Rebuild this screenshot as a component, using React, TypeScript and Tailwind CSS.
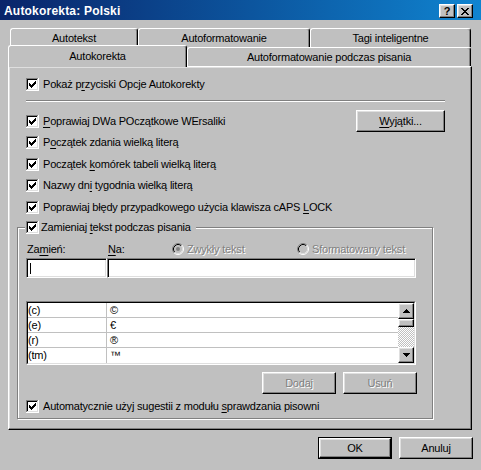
import React from "react";

const raised =
  "bg-[#c0c0c0] border border-t-white border-l-white border-b-black border-r-black shadow-[inset_-1px_-1px_0_#808080,inset_1px_1px_0_#dfdfdf]";

function CheckBox() {
  const cols: [number, number][] = [
    [3, 5],
    [4, 6],
    [5, 7],
    [6, 6],
    [7, 5],
    [8, 4],
    [9, 3],
  ];
  return (
    <svg width="13" height="13" viewBox="0 0 13 13" shapeRendering="crispEdges" className="shrink-0 block">
      <rect x="0" y="0" width="13" height="13" fill="#fff" />
      <rect x="0" y="0" width="12" height="1" fill="#808080" />
      <rect x="0" y="0" width="1" height="12" fill="#808080" />
      <rect x="1" y="1" width="10" height="1" fill="#000" />
      <rect x="1" y="1" width="1" height="10" fill="#000" />
      <rect x="1" y="11" width="11" height="1" fill="#dfdfdf" />
      <rect x="11" y="1" width="1" height="11" fill="#dfdfdf" />
      {cols.map(([x, y]) => (
        <rect key={x} x={x} y={y} width="1" height="3" fill="#000" />
      ))}
    </svg>
  );
}

function Radio({ on }: { on?: boolean }) {
  return (
    <svg width="12" height="12" viewBox="0 0 12 12" className="shrink-0 block">
      <circle cx="6" cy="6" r="5" fill="#c0c0c0" />
      <path d="M2.11 9.89 A5.5 5.5 0 0 1 9.89 2.11" fill="none" stroke="#808080" strokeWidth="1" />
      <path d="M9.89 2.11 A5.5 5.5 0 0 1 2.11 9.89" fill="none" stroke="#fff" strokeWidth="1" />
      <path d="M2.82 9.18 A4.5 4.5 0 0 1 9.18 2.82" fill="none" stroke="#000" strokeWidth="1" />
      <path d="M9.18 2.82 A4.5 4.5 0 0 1 2.82 9.18" fill="none" stroke="#dfdfdf" strokeWidth="1" />
      {on && <circle cx="6" cy="6" r="2" fill="#808080" />}
    </svg>
  );
}

function CheckRow({ children, className = "" }: { children: React.ReactNode; className?: string }) {
  return (
    <div className={"flex items-center h-[13px] whitespace-nowrap " + className}>
      <CheckBox />
      <span className="ml-[4px] leading-none">{children}</span>
    </div>
  );
}

function U({ children }: { children: React.ReactNode }) {
  return <span className="underline underline-offset-[2px]">{children}</span>;
}

function Arrow({ up }: { up?: boolean }) {
  const rows = up
    ? [
        [3, 1],
        [2, 3],
        [1, 5],
        [0, 7],
      ]
    : [
        [0, 7],
        [1, 5],
        [2, 3],
        [3, 1],
      ];
  return (
    <svg width="7" height="4" viewBox="0 0 7 4" shapeRendering="crispEdges" className="block">
      {rows.map(([x, w], i) => (
        <rect key={i} x={x} y={i} width={w} height="1" fill="#000" />
      ))}
    </svg>
  );
}

function CloseGlyph() {
  const r: [number, number, number][] = [
    [0, 0, 2], [6, 0, 2],
    [1, 1, 2], [5, 1, 2],
    [2, 2, 4],
    [3, 3, 2],
    [2, 4, 4],
    [1, 5, 2], [5, 5, 2],
    [0, 6, 2], [6, 6, 2],
  ];
  return (
    <svg width="8" height="7" viewBox="0 0 8 7" shapeRendering="crispEdges" className="block">
      {r.map(([x, y, w], i) => (
        <rect key={i} x={x} y={y} width={w} height="1" fill="#000" />
      ))}
    </svg>
  );
}

const tabCls =
  "h-full flex justify-center pt-[2px] bg-[#c0c0c0] border-l border-t border-r border-l-white border-t-white border-r-black rounded-t-[3px] shadow-[inset_-1px_0_0_#808080] whitespace-nowrap leading-[14px]";

const disabledText = "text-[#808080] [text-shadow:1px_1px_0_#fff]";

export default function App() {
  const rows: [string, string][] = [
    ["(c)", "©"],
    ["(e)", "€"],
    ["(r)", "®"],
    ["(tm)", "™"],
  ];
  return (
    <div className="w-[481px] h-[470px] bg-[#c0c0c0] font-['Liberation_Sans',Arial,sans-serif] text-[11px] tracking-[-0.2px] text-black flex flex-col overflow-hidden select-none">
      {/* Title bar */}
      <div className="h-[20px] shrink-0 flex items-center pt-[2px] pl-[4px] pr-[8px] bg-linear-to-r from-[#0a246a] to-[#1084d0]">
        <div className="flex-1 text-white font-bold text-[12px] tracking-[0.2px] leading-none">Autokorekta: Polski</div>
        <div className="flex gap-[2px]">
          <div className={"w-[16px] h-[14px] flex items-center justify-center " + raised}>
            <span className="font-bold text-[11px] leading-none tracking-normal">?</span>
          </div>
          <div className={"w-[16px] h-[14px] flex items-center justify-center " + raised}>
            <CloseGlyph />
          </div>
        </div>
      </div>

      {/* Tabs back row */}
      <div className="mt-[8px] h-[19px] shrink-0 flex pl-[10px]">
        <div className={tabCls + " w-[128px]"}>Autotekst</div>
        <div className={tabCls + " w-[172px]"}>Autoformatowanie</div>
        <div className={tabCls + " w-[161px]"}>Tagi inteligentne</div>
      </div>
      {/* Tabs front row */}
      <div className="-mt-[2px] h-[21px] shrink-0 flex items-end pl-[8px] relative z-10">
        <div className={tabCls + " w-[179px] !h-[22px] -mb-[1px] pt-[3px]"}>Autokorekta</div>
        <div className={tabCls + " w-[284px] !h-[19px]"}>Autoformatowanie podczas pisania</div>
      </div>

      {/* Panel */}
      <div className="ml-[8px] w-[464px] h-[364px] shrink-0 border border-t-white border-l-white border-b-black border-r-black shadow-[inset_-1px_-1px_0_#808080,inset_1px_1px_0_#dfdfdf] flex flex-col">
        <div className="ml-[17px] w-[419px] pt-[11px] flex flex-col">
          <CheckRow>
            Pokaż p<U>r</U>zyciski Opcje Autokorekty
          </CheckRow>
          <div className="mt-[9px] h-[2px] border-t border-t-[#808080] border-b border-b-white" />
          <div className="mt-[8px] h-[22px] flex items-center justify-between">
            <CheckRow>
              <U>P</U>oprawiaj DWa POczątkowe WErsaliki
            </CheckRow>
            <div className={"w-[89px] h-[22px] flex items-center justify-center " + raised}>
              <span className="leading-none">
                <U>W</U>yjątki...
              </span>
            </div>
          </div>
          <CheckRow className="mt-[4px]">
            P<U>o</U>czątek zdania wielką literą
          </CheckRow>
          <CheckRow className="mt-[9px]">
            Początek <U>k</U>omórek tabeli wielką literą
          </CheckRow>
          <CheckRow className="mt-[8px]">
            Nazwy dn<U>i</U> tygodnia wielką literą
          </CheckRow>
          <CheckRow className="mt-[9px]">
            Poprawiaj błędy przypadkowego użycia klawisza cAPS <U>L</U>OCK
          </CheckRow>
        </div>

        {/* Group box */}
        <div className="mt-[13px] ml-[8px] w-[416px] relative border border-[#808080] shadow-[inset_1px_1px_0_#fff,1px_1px_0_#fff] pl-[8px] pr-[15px] pt-[14px] pb-[5px]">
          <div className="absolute left-[7px] -top-[7px] h-[13px] flex items-center bg-[#c0c0c0] pl-[1px] pr-[5px] whitespace-nowrap">
            <CheckBox />
            <span className="ml-[2px] leading-none">
              Zamieniaj <U>t</U>ekst podczas pisania
            </span>
          </div>

          <div className="h-[14px] flex items-center whitespace-nowrap">
            <div className="w-[81px] pl-[1px] leading-none">
              Za<U>m</U>ień:
            </div>
            <div className="w-[65px] pl-[1px] leading-none">
              <U>N</U>a:
            </div>
            <div className="w-[125px] flex items-center">
              <Radio on />
              <span className={"ml-[3px] leading-none " + disabledText}>Zwykły tekst</span>
            </div>
            <div className="flex items-center">
              <Radio />
              <span className={"ml-[3px] leading-none " + disabledText}>Sformatowany tekst</span>
            </div>
          </div>

          <div className="mt-[2px] h-[20px] flex">
            <div className="w-[81px] h-full bg-white border border-t-[#808080] border-l-[#808080] border-b-white border-r-white shadow-[inset_1px_1px_0_#000,inset_-1px_-1px_0_#dfdfdf] flex items-center">
              <div className="ml-[3px] w-[1px] h-[11px] bg-black" />
            </div>
            <div className="w-[309px] h-full bg-white border border-t-[#808080] border-l-[#808080] border-b-white border-r-white shadow-[inset_1px_1px_0_#000,inset_-1px_-1px_0_#dfdfdf]" />
          </div>

          {/* List */}
          <div className="mt-[23px] h-[64px] w-[390px] border border-t-[#808080] border-l-[#808080] border-b-white border-r-white">
            <div className="h-full border border-t-black border-l-black border-b-[#dfdfdf] border-r-[#dfdfdf] bg-white flex">
              <div className="flex-1 flex flex-col">
                {rows.map(([a, b], i) => (
                  <div
                    key={a}
                    className={"h-[15px] flex " + (i < 3 ? "border-b border-[#c0c0c0]" : "")}
                  >
                    <div className="w-[79px] border-r border-[#c0c0c0] leading-[14px] whitespace-nowrap">{a}</div>
                    <div className="flex-1 pl-[3px] leading-[14px]">{b}</div>
                  </div>
                ))}
              </div>
              <div className="w-[16px] flex flex-col">
                <div className={"h-[16px] flex items-center justify-center " + raised}>
                  <Arrow up />
                </div>
                <div className={"h-[8px] " + raised} />
                <div className="h-[20px] bg-[repeating-conic-gradient(#ffffff_0%_25%,#c0c0c0_0%_50%)] bg-[length:2px_2px]" />
                <div className={"h-[16px] flex items-center justify-center " + raised}>
                  <Arrow />
                </div>
              </div>
            </div>
          </div>

          <div className="mt-[7px] h-[22px] flex justify-end gap-[7px]">
            <div className={"w-[74px] h-full flex items-center justify-center " + raised}>
              <span className={"leading-none " + disabledText}>Dodaj</span>
            </div>
            <div className={"w-[74px] h-full flex items-center justify-center " + raised}>
              <span className={"leading-none " + disabledText}>Usuń</span>
            </div>
          </div>

          <CheckRow className="mt-[6px]">
            Automatycznie użyj sugestii z modułu <U>s</U>prawdzania pisowni
          </CheckRow>
        </div>
      </div>

      {/* Bottom buttons */}
      <div className="mt-[7px] h-[22px] shrink-0 flex justify-end gap-[7px] pr-[8px]">
        <div className="w-[74px] h-full border border-black">
          <div className={"h-full flex items-center justify-center " + raised}>
            <span className="leading-none">OK</span>
          </div>
        </div>
        <div className={"w-[74px] h-full flex items-center justify-center " + raised}>
          <span className="leading-none">Anuluj</span>
        </div>
      </div>
    </div>
  );
}
